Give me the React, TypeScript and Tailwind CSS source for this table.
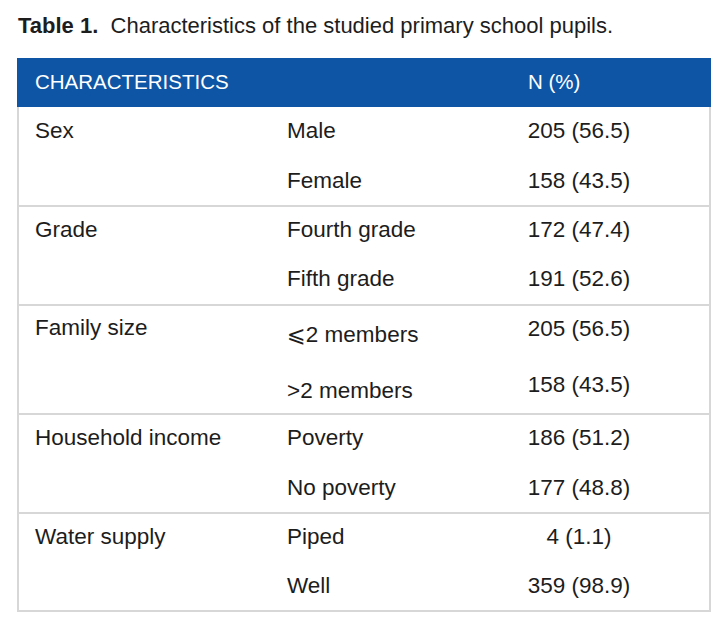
type Group = {
  label: string;
  rows: [string, string][];
  box: string;
  labelLine: string;
  lines2: string[];
  lines3: string[];
};

const groups: Group[] = [
  {
    label: "Sex",
    rows: [
      ["Male", "205 (56.5)"],
      ["Female", "158 (43.5)"],
    ],
    box: "h-[98px]",
    labelLine: "h-[48px]",
    lines2: ["h-[48px]", "h-[52px]"],
    lines3: ["h-[48px]", "h-[52px]"],
  },
  {
    label: "Grade",
    rows: [
      ["Fourth grade", "172 (47.4)"],
      ["Fifth grade", "191 (52.6)"],
    ],
    box: "h-[99px] border-t-2",
    labelLine: "h-[46px]",
    lines2: ["h-[46px]", "h-[52px]"],
    lines3: ["h-[46px]", "h-[52px]"],
  },
  {
    label: "Family size",
    rows: [
      ["⩽2 members", "205 (56.5)"],
      [">2 members", "158 (43.5)"],
    ],
    box: "h-[109px] border-t-2",
    labelLine: "h-[44px]",
    lines2: ["h-[58px]", "h-[54px]"],
    lines3: ["h-[46px]", "h-[66px]"],
  },
  {
    label: "Household income",
    rows: [
      ["Poverty", "186 (51.2)"],
      ["No poverty", "177 (48.8)"],
    ],
    box: "h-[99px] border-t-2",
    labelLine: "h-[46px]",
    lines2: ["h-[46px]", "h-[54px]"],
    lines3: ["h-[46px]", "h-[54px]"],
  },
  {
    label: "Water supply",
    rows: [
      ["Piped", "4 (1.1)"],
      ["Well", "359 (98.9)"],
    ],
    box: "h-[98px] border-t-2",
    labelLine: "h-[46px]",
    lines2: ["h-[46px]", "h-[52px]"],
    lines3: ["h-[46px]", "h-[52px]"],
  },
];

export default function App() {
  return (
    <div className="w-[728px] h-[629px] bg-white text-[#1d1d1d] font-['Liberation_Sans','DejaVu_Sans',Arial,sans-serif]">
      <p className="pl-[18px] pt-[13px] text-[22px] leading-[26px] whitespace-pre">
        <span className="font-bold">Table 1.</span>
        {"  Characteristics of the studied primary school pupils."}
      </p>

      <div className="mt-[19px] ml-[17px] w-[694px]">
        <div className="grid grid-cols-[511px_1fr] h-[49px] items-center bg-[#0e56a5] text-white text-[20.5px]">
          <span className="pl-[18px]">CHARACTERISTICS</span>
          <span>N (%)</span>
        </div>

        <div className="border-x-2 border-b-2 border-[#d7d7d7] text-[22.5px]">
          {groups.map((g) => (
            <div
              key={g.label}
              className={`grid grid-cols-[268px_1fr_260px] border-[#d7d7d7] ${g.box}`}
            >
              <div className={`flex items-center pl-4 ${g.labelLine}`}>{g.label}</div>
              <div className="flex flex-col">
                {g.rows.map((r, i) => (
                  <div key={r[0]} className={`flex items-center ${g.lines2[i]}`}>
                    {r[0]}
                  </div>
                ))}
              </div>
              <div className="flex flex-col">
                {g.rows.map((r, i) => (
                  <div key={r[1]} className={`flex items-center justify-center ${g.lines3[i]}`}>
                    {r[1]}
                  </div>
                ))}
              </div>
            </div>
          ))}
        </div>
      </div>
    </div>
  );
}
